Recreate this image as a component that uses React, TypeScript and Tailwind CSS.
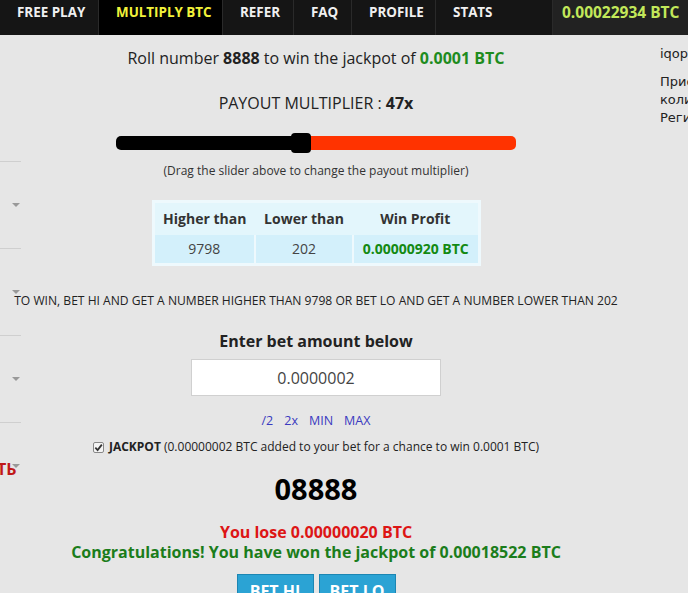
import React from 'react';

const navItems = ['FREE PLAY', 'MULTIPLY BTC', 'REFER', 'FAQ', 'PROFILE', 'STATS'];
const navWidths = ['w-[99px]', 'w-[124px]', 'w-[71px]', 'w-[58px]', 'w-[84px]', 'w-[117px]'];

const Sidebar = () => (
  <div className="absolute left-0 top-[35px] w-[21px] h-[470px] overflow-hidden">
    <div className="h-[126px]" />
    {[0, 1, 2, 3].map((i) => (
      <div key={i} className="relative h-[87px] border-t border-[#cfcfcf]">
        <span className="absolute left-[12px] top-[41px] w-0 h-0 border-l-[4px] border-r-[4px] border-t-[4px] border-l-transparent border-r-transparent border-t-[#999]" />
        {i === 3 && (
          <span className="absolute left-[-3px] top-[34px] text-[16px] font-bold text-[#c01818]">ТЬ</span>
        )}
      </div>
    ))}
  </div>
);

export default function App() {
  return (
    <div className="relative w-[688px] h-[593px] overflow-hidden bg-[#e6e6e6] font-['Open_Sans',sans-serif]">
      <nav className="flex h-[35px] bg-[#151515] text-[13.4px] font-bold">
        {navItems.map((item, i) => (
          <div
            key={item}
            className={`${navWidths[i]} pl-[17px] pt-[3px] leading-[18px] whitespace-nowrap border-r border-[#2a2a2a] ${
              item === 'MULTIPLY BTC' ? 'bg-black text-[#f2f23a]' : 'text-[#f0f0f0]'
            }`}
          >
            {item}
          </div>
        ))}
        <div className="flex-1 pl-[9px] pt-[2px] leading-[20px] bg-[#222222] text-[#c3e85a] text-[15.5px] whitespace-nowrap">
          0.00022934 BTC
        </div>
      </nav>

      <Sidebar />

      <div className="flex">
        <main className="w-[632px] shrink-0 flex flex-col items-center text-[#222]">
          <p className="mt-[12px] text-[16px] leading-[22px]">
            Roll number <b>8888</b> to win the jackpot of{' '}
            <b className="text-[#1e8c1e]">0.0001 BTC</b>
          </p>
          <p className="mt-[23px] text-[16px] leading-[22px]">
            PAYOUT MULTIPLIER : <b>47x</b>
          </p>
          <div className="relative mt-[22px] w-[400px] h-[14px] flex">
            <div className="w-[184px] h-full rounded-l-[5px] bg-black" />
            <div className="flex-1 h-full rounded-r-[5px] bg-[#ff3300]" />
            <div className="absolute left-[175px] top-[-3px] w-[20px] h-[20px] rounded-[4px] bg-black" />
          </div>
          <p className="mt-[13px] text-[12px] leading-[16px] text-[#333]">
            (Drag the slider above to change the payout multiplier)
          </p>
          <table className="mt-[21px] border-[3px] border-[#eef9fd] text-[14px] border-collapse">
            <thead>
              <tr className="bg-[#e3f6fc] h-[33px]">
                <th className="w-[102px] font-bold text-[#333]">Higher than</th>
                <th className="w-[98px] font-bold text-[#333]">Lower than</th>
                <th className="w-[126px] font-bold text-[#333]">Win Profit</th>
              </tr>
            </thead>
            <tbody>
              <tr className="bg-[#d3f0fb] h-[30px]">
                <td className="text-center text-[#444] border-r-2 border-[#eef9fd]">9798</td>
                <td className="text-center text-[#444] border-r-2 border-[#eef9fd]">202</td>
                <td className="text-center font-bold text-[#138a13]">0.00000920 BTC</td>
              </tr>
            </tbody>
          </table>
          <p className="mt-[27px] text-[12.1px] leading-[16px] text-[#222] whitespace-nowrap">
            TO WIN, BET HI AND GET A NUMBER HIGHER THAN 9798 OR BET LO AND GET A NUMBER LOWER THAN 202
          </p>
          <p className="mt-[21px] text-[16px] leading-[22px] font-bold text-[#222]">Enter bet amount below</p>
          <div className="mt-[7px] w-[250px] h-[37px] bg-white border border-[#d0d0d0] flex items-center justify-center text-[16px] text-[#444]">
            0.0000002
          </div>
          <div className="mt-[17px] flex gap-[11px] text-[12.5px] leading-[16px] text-[#3a3ac0]">
            <span>/2</span>
            <span>2x</span>
            <span>MIN</span>
            <span>MAX</span>
          </div>
          <div className="mt-[10px] flex items-center text-[12px] leading-[16px] text-[#222] whitespace-nowrap">
            <span className="mr-[5px] w-[11px] h-[11px] border border-[#888] rounded-[2px] bg-[#f4f4f4] flex items-center justify-center">
              <svg width="9" height="9" viewBox="0 0 10 10">
                <path d="M1.5 5.2 L4 7.8 L8.7 1.8" fill="none" stroke="#333" strokeWidth="2" />
              </svg>
            </span>
            <b>JACKPOT</b>&nbsp;(0.00000002 BTC added to your bet for a chance to win 0.0001 BTC)
          </div>
          <p className="mt-[16px] text-[29px] leading-[36px] font-bold text-black">08888</p>
          <p className="mt-[15px] text-[16px] leading-[20px] font-bold text-[#dd1515]">You lose 0.00000020 BTC</p>
          <p className="text-[16px] leading-[20px] font-bold text-[#1b7d1b] whitespace-nowrap">
            Congratulations! You have won the jackpot of 0.00018522 BTC
          </p>
          <div className="mt-[12px] flex gap-[5px]">
            <button className="w-[77px] h-[36px] pt-[4px] bg-[#2ba3d4] border border-[#1c86b3] text-white font-bold text-[16px] flex items-start justify-center">
              BET HI
            </button>
            <button className="w-[77px] h-[36px] pt-[4px] bg-[#2ba3d4] border border-[#1c86b3] text-white font-bold text-[16px] flex items-start justify-center">
              BET LO
            </button>
          </div>
        </main>
        <aside className="pl-[28px] pt-[10px] text-[13px] leading-[18px] text-[#222] whitespace-nowrap font-['DejaVu_Sans',sans-serif]">
          <p>iqoption</p>
          <p className="mt-[10px]">Присоединяйтесь</p>
          <p>количество</p>
          <p>Регистрация</p>
        </aside>
      </div>
    </div>
  );
}
